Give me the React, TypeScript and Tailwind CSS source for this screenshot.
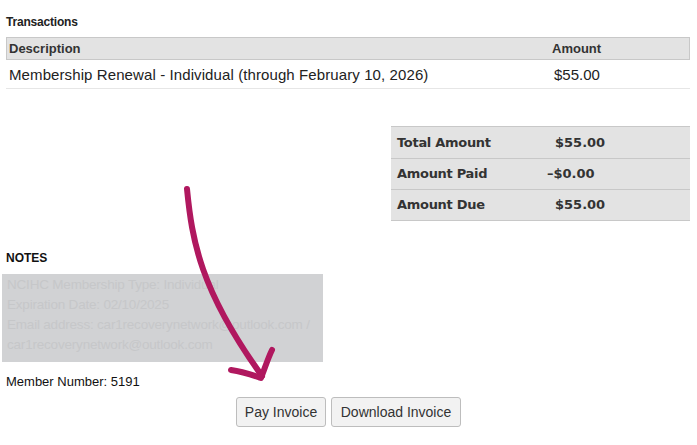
export default function App() {
  const f = { fontFamily: '"Liberation Sans", Arial, sans-serif' };
  const v = { fontFamily: '"DejaVu Sans", Verdana, sans-serif' };
  return (
    <div className="relative w-[697px] h-[445px] bg-white text-[#222]" style={f}>
      <div className="pt-[13px] pl-[6px] pr-[7px]">
        <div className="text-[12px] font-bold h-[24px] tracking-[-0.2px]">Transactions</div>
        <div className="flex h-[23px] items-center bg-[#e3e3e3] border border-[#c8c8c8] text-[13px] font-bold text-[#333]">
          <div className="pl-[2px] flex-1">Description</div>
          <div className="w-[137px]">Amount</div>
        </div>
        <div className="flex h-[29px] pt-[2px] items-center border-b border-[#e6e6e6] text-[15px] text-[#222]">
          <div className="pl-[3px] flex-1 tracking-[0.1px]">Membership Renewal - Individual (through February 10, 2026)</div>
          <div className="w-[137px] pl-[1px]">$55.00</div>
        </div>
      </div>
      <div className="mt-[37px] ml-[391px] w-[299px] text-[13px] font-bold text-[#333]" style={v}>
        {[["Total Amount", "$55.00", ""], ["Amount Paid", "–$0.00", "-ml-[8px]"], ["Amount Due", "$55.00", ""]].map(([a, b, c]) => (
          <div key={a} className="flex h-[31.5px] items-center bg-[#e3e3e3] border-t border-[#c8c8c8] last:border-b">
            <div className="pl-[6px] w-[164px] tracking-[-0.3px]">{a}</div>
            <div className={c}>{b}</div>
          </div>
        ))}
      </div>
      <div className="mt-[28px] pl-[6px] text-[12px] font-bold text-[#111]">NOTES</div>
      <div className="mt-[7px] ml-[2px] w-[321px] h-[88px] overflow-hidden whitespace-nowrap bg-[#d1d2d4] px-[5px] pt-[1px] text-[13.5px] leading-[20px] tracking-[-0.2px] text-[#c6c7c9]">
        <div>NCIHC Membership Type: Individual</div>
        <div>Expiration Date: 02/10/2025</div>
        <div>Email address: car1recoverynetwork@outlook.com /</div>
        <div>car1recoverynetwork@outlook.com</div>
      </div>
      <div className="mt-[10px] pl-[6px] text-[13px] text-[#111]">Member Number: 5191</div>
      <div className="mt-[6px] flex gap-[5px] pl-[236px]">
        <button className="h-[30px] w-[90px] rounded-[3px] border border-[#bdbdbd] bg-[#f2f2f2] text-[14px] text-[#333]" style={f}>Pay Invoice</button>
        <button className="h-[30px] w-[130px] rounded-[3px] border border-[#bdbdbd] bg-[#f2f2f2] text-[14px] text-[#333]" style={f}>Download Invoice</button>
      </div>
      <svg className="absolute left-0 top-0 pointer-events-none" width="697" height="445">
        <path d="M187 189 C 192 240, 200 290, 262 376" fill="none" stroke="#b0185f" strokeWidth="6" strokeLinecap="round" />
        <path d="M231 370 C 245 372, 255 376, 261 378 C 265 368, 268 358, 272 350" fill="none" stroke="#b0185f" strokeWidth="6" strokeLinecap="round" strokeLinejoin="round" />
      </svg>
    </div>
  );
}
